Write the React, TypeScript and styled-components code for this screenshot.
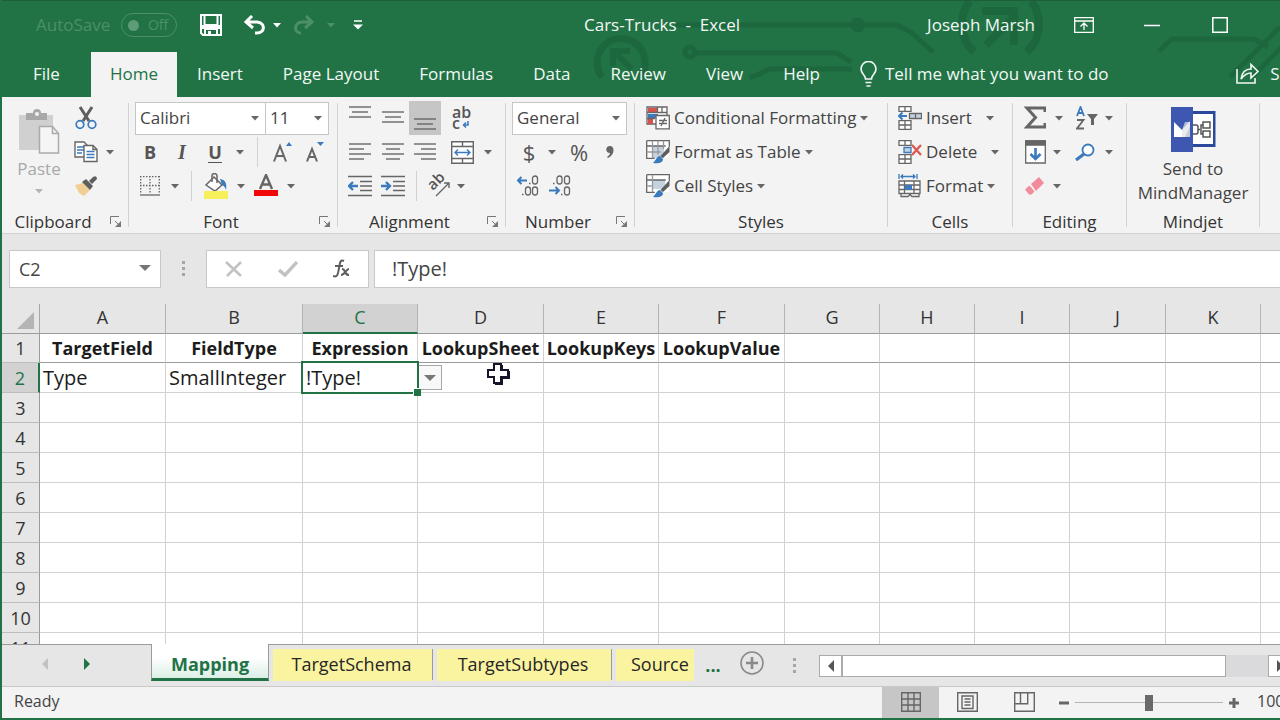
import React from "react";
import styled, { createGlobalStyle, css } from "styled-components";

const green = "#217346";
const ink = "#444444";
const blue = "#3a7abd";
const line = "#d2d2d2";
const sans = '"Open Sans", "Noto Sans", sans-serif';

const GlobalStyle = createGlobalStyle`
  *, *::before, *::after { box-sizing: border-box; }
  body { margin: 0; overflow: hidden; font-family: ${sans}; background: #e6e6e6; }
  button, input, select { font: inherit; color: inherit; }
  button { cursor: default; }
  svg { display: block; flex: none; }
`;

const Screen = styled.div`
  height: 100vh;
  overflow: hidden;
`;

/* The window hangs a little past the right edge of the screen. */
const Window = styled.div`
  width: calc(100% + 42px);
  height: 100%;
  display: flex;
  flex-direction: column;
  background: #e6e6e6;
  border-left: 2px solid ${green};
  border-bottom: 2px solid ${green};
  font-size: 17px;
  line-height: 24px;
  color: ${ink};
  white-space: nowrap;
`;

/* ---------- header ---------- */

const Header = styled.header`
  position: relative;
  flex: none;
  background: ${green};
  color: #f2f8f4;
  border-top: 1px solid #1d5f3b;
`;

const Circuit = styled.svg`
  position: absolute;
  right: 0;
  top: 0;
`;

const TitleBar = styled.div`
  position: relative;
  display: flex;
  align-items: center;
  height: 51px;
  padding-bottom: 3px;
`;

const QuickAccess = styled.div`
  flex: 1;
  display: flex;
  align-items: center;
`;

const AutoSave = styled.label`
  display: flex;
  align-items: center;
  gap: 11px;
  margin: 0 8px 0 34px;
  color: #4c8f69;
`;

const TogglePill = styled.span`
  display: flex;
  align-items: center;
  justify-content: space-between;
  width: 56px;
  height: 24px;
  padding: 0 8px 0 6px;
  border: 1px solid #4c8f69;
  border-radius: 12px;
  font-size: 14px;
  line-height: 20px;
`;

const ToggleDot = styled.input`
  appearance: none;
  width: 11px;
  height: 11px;
  margin: 0;
  border-radius: 50%;
  background: #5c9c78;
`;

const BarButton = styled.button<{ $w: number }>`
  display: flex;
  align-items: center;
  justify-content: center;
  flex: none;
  width: ${(p) => p.$w}px;
  height: 36px;
  padding: 0;
  border: 0;
  background: none;
`;

const DocTitle = styled.h1`
  margin: 0;
  font-size: 17px;
  font-weight: 400;
  white-space: pre;
`;

const WindowControls = styled.div`
  flex: 1;
  display: flex;
  align-items: center;
  justify-content: flex-end;
`;

const UserName = styled.span`
  margin-right: 15px;
`;

const RibbonTabs = styled.nav`
  position: relative;
  display: flex;
  align-items: stretch;
  height: 45px;
`;

const RibbonTab = styled.button<{ $active?: boolean; $pad?: number }>`
  padding: 0 ${(p) => p.$pad ?? 20}px 2px;
  border: 0;
  background: ${(p) => (p.$active ? "#f3f3f3" : "none")};
  color: ${(p) => (p.$active ? green : "inherit")};
`;

const TellMe = styled.button`
  display: flex;
  align-items: center;
  gap: 8px;
  padding: 0 20px 2px;
  border: 0;
  background: none;
`;

const Share = styled(TellMe)`
  margin-left: auto;
  gap: 10px;
  padding: 0 6px 2px 20px;
`;

/* ---------- ribbon ---------- */

const Ribbon = styled.div`
  display: flex;
  flex: none;
  height: 137px;
  padding-top: 4px;
  background: #f3f3f3;
  border-bottom: 1px solid ${line};
`;

const GroupBox = styled.section<{ $w: number }>`
  flex: none;
  width: ${(p) => p.$w}px;
  display: flex;
  flex-direction: column;
`;

const GroupBody = styled.div<{ $pad?: number }>`
  display: flex;
  height: 102px;
  padding-left: ${(p) => p.$pad ?? 0}px;
`;

const GroupFooter = styled.div`
  display: flex;
  align-items: center;
  padding-top: 7px;
  color: #333333;
`;

const GroupName = styled.span`
  flex: 1;
  text-align: center;
`;

const GroupRule = styled.div`
  flex: none;
  width: 1px;
  margin: 2px 0 6px;
  background: ${line};
`;

const Launcher = styled.button`
  display: grid;
  place-items: center;
  width: 24px;
  height: 24px;
  padding: 0;
  border: 0;
  background: none;
`;

const Rows = styled.div`
  display: grid;
  grid-template-rows: repeat(3, 34px);
`;

const Row = styled.div`
  display: flex;
  align-items: center;
`;

const ToolRule = styled.div<{ $gap: number }>`
  width: 1px;
  height: 30px;
  margin: 0 ${(p) => p.$gap}px;
  background: ${line};
`;

const Tool = styled.button<{ $w: number; $on?: boolean }>`
  display: flex;
  align-items: center;
  justify-content: center;
  flex: none;
  width: ${(p) => p.$w}px;
  height: 34px;
  padding: 0;
  border: 0;
  background: ${(p) => (p.$on ? "#c6c6c6" : "none")};
`;

const Glyph = styled.span<{ $kind?: "italic" | "underline" | "sign" }>`
  font-size: 18px;
  font-weight: 700;
  color: #555555;
  ${(p) =>
    p.$kind === "italic" &&
    css`
      font-family: "Liberation Serif", serif;
      font-style: italic;
      font-size: 20px;
    `}
  ${(p) =>
    p.$kind === "underline" &&
    css`
      line-height: 20px;
      border-bottom: 1px solid #555555;
    `}
  ${(p) =>
    p.$kind === "sign" &&
    css`
      font-size: 22px;
      font-weight: 400;
    `}
`;

const PasteButton = styled.button`
  display: flex;
  flex-direction: column;
  align-items: center;
  width: 50px;
  margin: 0 8px 0 12px;
  padding: 8px 0 0;
  border: 0;
  background: none;
  color: #a9a9a9;
`;

const PasteText = styled.span`
  margin: 2px 0 8px;
`;

const Picker = styled.span<{ $w: number }>`
  position: relative;
  flex: none;
  width: ${(p) => p.$w}px;
  height: 33px;
  & + & { margin-left: -1px; }
`;

const Select = styled.select`
  appearance: none;
  width: 100%;
  height: 33px;
  padding: 0 4px;
  border: 1px solid #c6c6c6;
  border-radius: 0;
  background: #ffffff;
`;

const PickerArrow = styled.span`
  position: absolute;
  right: 7px;
  top: 14px;
  pointer-events: none;
`;

const WideTool = styled.button<{ $gap?: number }>`
  display: flex;
  align-items: center;
  height: 34px;
  padding: 0;
  border: 0;
  background: none;
  text-align: left;
  & > span { margin: 0 ${(p) => p.$gap ?? 4}px 0 4px; }
`;

const BigTool = styled.button`
  display: flex;
  flex-direction: column;
  align-items: center;
  width: 100%;
  padding: 6px 0 0;
  border: 0;
  background: none;
`;

const BigToolText = styled.span`
  margin-top: 5px;
`;

/* ---------- formula bar ---------- */

const FormulaRow = styled.div`
  display: flex;
  flex: none;
  height: 70px;
  padding: 16px 0 16px 7px;
  font-size: 18px;
`;

const NameBox = styled.div`
  display: flex;
  width: 152px;
  background: #ffffff;
  border: 1px solid #c8c8c8;
`;

const NameInput = styled.input`
  flex: 1;
  min-width: 0;
  padding: 0 9px;
  border: 0;
  background: none;
`;

const Dots = styled.span`
  display: grid;
  place-items: center;
  width: 45px;
`;

const FormulaTools = styled.div`
  display: flex;
  align-items: center;
  width: 163px;
  background: #ffffff;
  border: 1px solid #c8c8c8;
`;

const FormulaInput = styled.input`
  flex: 1;
  margin-left: 5px;
  padding: 0 17px;
  border: 1px solid #c8c8c8;
  border-right: 0;
  background: #ffffff;
  font-size: 20px;
`;

/* ---------- sheet ---------- */

const SheetArea = styled.main`
  flex: 1;
  min-height: 0;
  overflow: hidden;
  background: #ffffff;
`;

const Sheet = styled.table`
  table-layout: fixed;
  width: 100%;
  border-collapse: separate;
  border-spacing: 0;
  color: #1c1c1c;
  font-size: 20px;
`;

const Col = styled.col<{ $w?: number }>`
  width: ${(p) => (p.$w ? `${p.$w}px` : "auto")};
`;

const Corner = styled.td`
  height: 30px;
  padding: 0 5px 4px 0;
  vertical-align: bottom;
  background: #e6e6e6;
  border-right: 1px solid #a6a6a6;
  border-bottom: 1px solid #9b9b9b;
  svg { margin-left: auto; }
`;

const ColHead = styled.th<{ $on?: boolean }>`
  height: 30px;
  padding: 0 0 ${(p) => (p.$on ? 2 : 3)}px;
  font-size: 18px;
  font-weight: 400;
  line-height: 24px;
  background: ${(p) => (p.$on ? "#d2d2d2" : "#e6e6e6")};
  color: ${(p) => (p.$on ? green : "#333333")};
  border-right: 1px solid #b4b4b4;
  border-bottom: ${(p) => (p.$on ? `2px solid ${green}` : "1px solid #9b9b9b")};
`;

const RowHead = styled.th<{ $on?: boolean }>`
  padding: 0;
  font-size: 18px;
  font-weight: 400;
  background: ${(p) => (p.$on ? "#d2d2d2" : "#e6e6e6")};
  color: ${(p) => (p.$on ? green : "#333333")};
  border-right: ${(p) => (p.$on ? `2px solid ${green}` : "1px solid #9b9b9b")};
  border-bottom: 1px solid #bdbdbd;
`;

const Cell = styled.td`
  position: relative;
  padding: 0 3px;
  border-right: 1px solid ${line};
  border-bottom: 1px solid ${line};
`;

const SheetRow = styled.tr<{ $frozen?: boolean }>`
  height: ${(p) => (p.$frozen ? 29 : 30)}px;
  ${(p) =>
    p.$frozen &&
    css`
      ${Cell} {
        padding: 0;
        border-bottom-color: #9b9b9b;
        font-size: 18px;
        font-weight: 700;
        text-align: center;
      }
    `}
`;

const Selection = styled.div`
  position: absolute;
  inset: -2px;
  border: 2px solid ${green};
  pointer-events: none;
  z-index: 2;
  &::after {
    content: "";
    position: absolute;
    right: -4px;
    bottom: -4px;
    width: 8px;
    height: 8px;
    background: ${green};
    border: 1px solid #ffffff;
    border-width: 1px 0 0 1px;
  }
`;

const CellMenu = styled.button`
  position: absolute;
  left: 100%;
  top: 2px;
  display: grid;
  place-items: center;
  width: 25px;
  height: 25px;
  padding: 0;
  background: #f8f8f8;
  border: 1px solid #a8a8a8;
  z-index: 1;
`;

const Pointer = styled.svg`
  position: absolute;
  left: 68px;
  top: -1px;
`;

/* ---------- sheet tabs ---------- */

const TabStrip = styled.div`
  display: flex;
  flex: none;
  height: 43px;
  border-top: 1px solid #9b9b9b;
  border-bottom: 1px solid #c8c8c8;
  font-size: 18px;
`;

const TabArrows = styled.div`
  display: flex;
  align-items: center;
  width: 149px;
  padding-left: 22px;
  padding-bottom: 4px;
`;

const ActiveTab = styled.button`
  width: 118px;
  height: 37px;
  margin-top: -1px;
  padding: 5px 0 0;
  border: 0;
  border-bottom: 3px solid ${green};
  border-left: 1px solid #9b9b9b;
  border-right: 1px solid #9b9b9b;
  background: linear-gradient(#ffffff 40%, #dcefe5);
  color: ${green};
  font-weight: 700;
`;

const ColourTab = styled.button<{ $w: number; $cut?: boolean }>`
  width: ${(p) => p.$w}px;
  height: 32px;
  margin: 4px 0 0 4px;
  padding: 0 2px 2px ${(p) => (p.$cut ? 15 : 0)}px;
  border: 0;
  text-align: ${(p) => (p.$cut ? "left" : "center")};
  background: #faf3a0;
  color: #262626;
`;

const TabRule = styled.span`
  width: 1px;
  height: 31px;
  margin-top: 4px;
  background: #9b9b9b;
`;

const MoreTabs = styled.button`
  width: 38px;
  padding: 0 0 2px;
  border: 0;
  background: none;
  color: ${green};
  font-weight: 700;
`;

const ScrollBar = styled.div`
  display: flex;
  flex: 1;
  height: 22px;
  margin: 10px 31px 0 2px;
  background: #dadadc;
`;

const ScrollButton = styled.button`
  display: grid;
  place-items: center;
  width: 23px;
  padding: 0;
  border: 1px solid #ababab;
  background: #ffffff;
`;

const ScrollThumb = styled.div`
  flex: 1;
  margin-right: 42px;
  margin-left: -1px;
  border: 1px solid #ababab;
  border-left-width: 2px;
  background: #ffffff;
`;

/* ---------- status bar ---------- */

const StatusBar = styled.footer`
  display: flex;
  align-items: center;
  flex: none;
  height: 31px;
  padding-left: 12px;
  background: #f3f3f3;
  font-size: 16px;
`;

const Status = styled.span`
  flex: 1;
  padding-bottom: 3px;
`;

const ViewButton = styled.button<{ $on?: boolean }>`
  display: grid;
  place-items: center;
  width: 57px;
  height: 31px;
  padding: 0 0 1px;
  border: 0;
  background: ${(p) => (p.$on ? "#c6c6c6" : "none")};
`;

const Zoom = styled.input`
  appearance: none;
  width: 148px;
  height: 16px;
  margin: 0;
  background: linear-gradient(#b4b4b4, #b4b4b4) center / 100% 1px no-repeat;
  &::-webkit-slider-thumb {
    appearance: none;
    width: 8px;
    height: 16px;
    background: #6a6a6a;
  }
`;

const ZoomStep = styled.button`
  display: grid;
  place-items: center;
  width: 22px;
  height: 24px;
  padding: 0;
  border: 0;
  background: none;
`;

const ZoomValue = styled.button`
  width: 77px;
  padding: 0 0 3px 12px;
  border: 0;
  background: none;
  text-align: left;
`;

/* ---------- drawings ---------- */

const Arrow = ({ fill = "#666666" }: { fill?: string }) => (
  <svg width="8" height="5" viewBox="0 0 8 5"><path d="M0 0h8L4 4.6z" fill={fill} /></svg>
);

const WideArrow = () => (
  <svg width="12" height="6" viewBox="0 0 12 6"><path d="M0 0h12L6 6z" fill="#777777" /></svg>
);

const Side = ({ left, fill }: { left?: boolean; fill: string }) => (
  <svg width="6" height="12" viewBox="0 0 6 12"><path d={left ? "M6 0v12L0 6z" : "M0 0v12l6-6z"} fill={fill} /></svg>
);

type DrawProps = { w: number; h: number; children: React.ReactNode; stroke?: string; sw?: number };
const Draw = ({ w, h, children, stroke = "#666666", sw = 1.5 }: DrawProps) => (
  <svg width={w} height={h} viewBox={`0 0 ${w} ${h}`} fill="none" stroke={stroke} strokeWidth={sw} aria-hidden="true">{children}</svg>
);

const DotsIcon = () => (
  <Draw w={4} h={16} stroke="none"><path d="M0 0h3v3H0zM0 6h3v3H0zM0 12h3v3H0z" fill="#a6a6a6" /></Draw>
);

const LauncherIcon = () => (
  <Draw w={12} h={12} stroke="#777777" sw={1}>
    <path d="M.5 8V.5H9M5 5l4 4" /><path d="M11 5v6H5z" fill="#777777" stroke="none" />
  </Draw>
);

const Lines = ({ rows }: { rows: [number, number, number][] }) => (
  <Draw w={22} h={24} sw={1.4}>
    {rows.map(([y, a, b]) => <path key={y} d={`M${a} ${y}H${b}`} />)}
  </Draw>
);

const IndentIcon = ({ more }: { more?: boolean }) => (
  <Draw w={24} h={22} sw={1.4}>
    <path d="M0 1.5h24M12 6.500h12M12 11h12M12 15.500h12M0 20.500h24" />
    {more
      ? <path d="M0 11h8M5 7l4 4-4 4" stroke={blue} strokeWidth="2.400" />
      : <path d="M2 11h8M5 7l-4 4 4 4" stroke={blue} strokeWidth="2.400" />}
  </Draw>
);

const TableBrush = ({ head }: { head?: boolean }) => (
  <Draw w={24} h={24} sw={1.3}>
    <path d="M1 1h22v17H1z" fill="#fff" stroke="none" />
    <path d={head ? "M7 6h12v9H7z" : "M7 6h11v12H7z"} fill="#c5d3e0" stroke="none" />
    <path d="M.7.7h22.600v6M.7.7v17.600h8M.7 6h19" />
    {head
      ? <path d="M6.500.7v17.600M.7 12h5" stroke="#999999" />
      : <path d="M6.500.7v17.600M12 .7v14M17.500.7V9M.7 12h14" stroke="#999999" />}
    <path d="m23.500 6-9 10 2.500 2 6.500-6z" fill="#5e5e5e" stroke="none" />
    <path d="M14 16c-3 0-3 3-7 7 5 1 10 0 10-4z" fill={blue} stroke="none" />
  </Draw>
);

const CellsBase = () => (
  <path d="M1 .7h12v4.600H1zM7 .7v4.600M1 14.700h12v8.600H1zM7 14.700v8.600M1 19h12" fill="#fff" />
);

const CircuitArt = () => (
  <Circuit width="740" height="96" viewBox="0 0 740 96" fill="none" stroke="#1d673f" strokeWidth="5" aria-hidden="true">
    <path d="M20 76a24 24 0 1 1 39-1" strokeWidth="7" />
    <path d="M50 68 33 52M31 65V50h17" strokeWidth="6" />
    <path d="M93 24h222l14 7 22 20" />
    <circle cx="276" cy="24" r="5" />
    <circle cx="108" cy="51" r="5" />
    <path d="M113 52h142l14 9M270 68h-82l-20 9" />
    <path d="M392 51a38 38 0 0 1-4-51M445 51a38 38 0 0 0 4-51" strokeWidth="8" />
    <path d="M400 10h36M432 12v32M434 14l-30 30" strokeWidth="8" />
    <path d="M577 50l13-12h82l14 8M698 26l-50 50M720 26l-50 50" />
  </Circuit>
);

/* ---------- pieces ---------- */

type GroupProps = { name: string; w: number; pad?: number; launcher?: boolean; children: React.ReactNode };
const Group = ({ name, w, pad, launcher, children }: GroupProps) => (
  <>
    <GroupBox $w={w} aria-label={name}>
      <GroupBody $pad={pad}>{children}</GroupBody>
      <GroupFooter>
        <GroupName>{name}</GroupName>
        {launcher && <Launcher aria-label={`${name} settings`}><LauncherIcon /></Launcher>}
      </GroupFooter>
    </GroupBox>
    <GroupRule />
  </>
);

const Drop = ({ w, label }: { w: number; label: string }) => (
  <Tool $w={w} aria-label={label}><Arrow /></Tool>
);

const PickerField = ({ w, label, value }: { w: number; label: string; value: string }) => (
  <Picker $w={w}>
    <Select aria-label={label} defaultValue={value}><option>{value}</option></Select>
    <PickerArrow><Arrow /></PickerArrow>
  </Picker>
);

/* The last column takes whatever width is left. */
const columns: [string, number?][] = [
  ["A", 126], ["B", 137], ["C", 115], ["D", 126], ["E", 115], ["F", 126],
  ["G", 95], ["H", 95], ["I", 95], ["J", 96], ["K", 95], ["L"],
];
const data: Record<number, string[]> = {
  1: ["TargetField", "FieldType", "Expression", "LookupSheet", "LookupKeys", "LookupValue"],
  2: ["Type", "SmallInteger", "!Type!"],
};
const rowNumbers = Array.from({ length: 12 }, (_, i) => i + 1);

export default function App() {
  return (
    <Screen>
      <GlobalStyle />
      <Window>
        <Header>
          <CircuitArt />
          <TitleBar>
            <QuickAccess>
              <AutoSave>
                AutoSave
                <TogglePill><ToggleDot type="checkbox" disabled />Off</TogglePill>
              </AutoSave>
              <BarButton $w={52} aria-label="Save">
                <Draw w={22} h={22} stroke="#ffffff" sw={2}>
                  <path d="M1 1h20v20H3l-2-2zM4.500 1v10h13V1M5 21v-6h12v6" />
                  <path d="M1 11h20v4H1z" fill="#fff" stroke="none" /><path d="M9.500 17v4" strokeWidth="3" />
                </Draw>
              </BarButton>
              <BarButton $w={36} aria-label="Undo">
                <Draw w={24} h={20} stroke="#ffffff" sw={3}>
                  <path d="M4 7h10c9 1 8 11 0 11h-2M9 1 3 7l7 6" />
                </Draw>
              </BarButton>
              <BarButton $w={8} aria-label="Undo history"><Arrow fill="#ffffff" /></BarButton>
              <BarButton $w={46} aria-label="Redo">
                <Draw w={22} h={20} stroke="#4c8f69" sw={3}>
                  <path d="M18 7H9C0 8 1 18 8 18M13 1l6 6-7 6" />
                </Draw>
              </BarButton>
              <BarButton $w={8} aria-label="Redo history"><Arrow fill="#4c8f69" /></BarButton>
              <BarButton $w={46} aria-label="Customize toolbar">
                <Draw w={10} h={10} stroke="#ffffff"><path d="M1 1h8" /><path d="M0 4.500h10l-5 5z" fill="#fff" stroke="none" /></Draw>
              </BarButton>
            </QuickAccess>
            <DocTitle>{"Cars-Trucks  -  Excel"}</DocTitle>
            <WindowControls>
              <UserName>Joseph Marsh</UserName>
              <BarButton $w={68} aria-label="Ribbon display options">
                <Draw w={20} h={16} stroke="#ffffff" sw={1.3}><path d="M.7.7h18.600v14.600H.7zM.7 4h18.600M10 13V6M6.500 9.500 10 6l3.500 3.500" /></Draw>
              </BarButton>
              <BarButton $w={68} aria-label="Minimize"><Draw w={16} h={16} stroke="#ffffff"><path d="M0 8.500h16" /></Draw></BarButton>
              <BarButton $w={68} aria-label="Maximize"><Draw w={16} h={16} stroke="#ffffff"><path d="M.8.8h14.400v14.400H.8z" /></Draw></BarButton>
              <BarButton $w={68} aria-label="Close"><Draw w={16} h={16} stroke="#ffffff"><path d="m1 1 14 14M15 1 1 15" /></Draw></BarButton>
            </WindowControls>
          </TitleBar>
          <RibbonTabs>
            <RibbonTab $pad={31}>File</RibbonTab>
            <RibbonTab $active $pad={19}>Home</RibbonTab>
            {["Insert", "Page Layout", "Formulas", "Data", "Review", "View", "Help"].map((t) => <RibbonTab key={t}>{t}</RibbonTab>)}
            <TellMe>
              <Draw w={17} h={26} stroke="#f2f8f4" sw={1.6}>
                <path d="M5.500 18c0-4-4.500-5-4.500-10a7.500 7.500 0 0 1 15 0c0 5-4.500 6-4.500 10zM5.500 21.500h6M6.500 25h4" />
              </Draw>
              Tell me what you want to do
            </TellMe>
            <Share>
              <Draw w={24} h={22} stroke="#f2f8f4" sw={1.6}>
                <path d="M1 6v14h18v-5M5 16c1-7 5-10 10-10V1.500l7 7-7 6.500v-5c-4 0-7 2-10 6z" />
              </Draw>
              Share
            </Share>
          </RibbonTabs>
        </Header>

        <Ribbon>
          <Group name="Clipboard" w={126} launcher>
            <PasteButton>
              <Draw w={42} h={46} stroke="none">
                <path d="M1 6h34v35H1z" fill="#d0d0d0" />
                <path d="M8 4h7a4 4 0 0 1 8 0h6v7H8z" fill="#a8a8a8" /><circle cx="19" cy="5" r="2" fill="#f3f3f3" />
                <path d="M21.500 17.500h13l6 7V44h-19z" fill="#f6f4f6" stroke="#aaaaaa" strokeWidth="1.500" />
                <path d="M34.500 17.500v7h6" stroke="#aaaaaa" strokeWidth="1.500" />
              </Draw>
              <PasteText>Paste</PasteText>
              <Arrow fill="#b5b5b5" />
            </PasteButton>
            <Rows>
              <Row>
                <Tool $w={28} aria-label="Cut">
                  <Draw w={22} h={24} sw={3}>
                    <path d="m5 1 9 14M17 1 8 15" stroke="#5e5e5e" />
                    <circle cx="5" cy="18.500" r="3.800" stroke={blue} strokeWidth="1.700" /><circle cx="17" cy="18.500" r="3.800" stroke={blue} strokeWidth="1.700" />
                  </Draw>
                </Tool>
              </Row>
              <Row>
                <Tool $w={28} aria-label="Copy">
                  <Draw w={24} h={22} sw={1.4}>
                    <path d="M1 1h9l3 3v12H1z" fill="#fff" /><path d="M3 6h7M3 9h7M3 12h5" stroke={blue} />
                    <path d="M10 4.500h9l4 4v12H10z" fill="#fff" /><path d="M19 4.500v4h4" /><path d="M12.500 10.500h8M12.500 13.500h8M12.500 16.500h8" stroke={blue} />
                  </Draw>
                </Tool>
                <Drop w={20} label="Copy options" />
              </Row>
              <Row>
                <Tool $w={28} aria-label="Format painter">
                  <Draw w={24} h={22} stroke="none">
                    <path d="m1 10 8-2 7 7-6 6-5-3z" fill="#efcf94" /><path d="m8 7 4-3 7 7-3 4z" fill="#5e5e5e" /><path d="m15 6 4-4q4-2 4 2l-5 5z" fill="#5e5e5e" />
                  </Draw>
                </Tool>
              </Row>
            </Rows>
          </Group>

          <Group name="Font" w={208} pad={6} launcher>
            <Rows>
              <Row>
                <PickerField w={131} label="Font" value="Calibri" />
                <PickerField w={64} label="Font size" value="11" />
              </Row>
              <Row>
                <Tool $w={30}><Glyph>B</Glyph></Tool>
                <Tool $w={34}><Glyph $kind="italic">I</Glyph></Tool>
                <Tool $w={32}><Glyph $kind="underline">U</Glyph></Tool>
                <Drop w={18} label="Underline styles" />
                <ToolRule $gap={8} />
                <Tool $w={34} aria-label="Increase font size">
                  <Draw w={20} h={22} sw={2}><path d="M1 20.500 7 5l6 15.500M3 15h8" /><path d="M13 5h6l-3-4z" fill={blue} stroke="none" /></Draw>
                </Tool>
                <Tool $w={30} aria-label="Decrease font size">
                  <Draw w={18} h={22} sw={2}><path d="M1 20.500 6 8l5 12.500M3 16h6" /><path d="M11 1h7l-3.500 4z" fill={blue} stroke="none" /></Draw>
                </Tool>
              </Row>
              <Row>
                <Tool $w={30} aria-label="Borders">
                  <Draw w={20} h={20} sw={1.3}><path d="M.7 0v18M10 0v18M19.300 0v18M0 .7h20M0 9.500h20" strokeDasharray="1.500 1.500" /><path d="M0 19h20" /></Draw>
                </Tool>
                <Drop w={20} label="Border styles" />
                <ToolRule $gap={6} />
                <Tool $w={36} aria-label="Fill colour">
                  <Draw w={24} h={26} sw={1.5}>
                    <path d="M2 12 10 4l8 8-7 6z" fill="#fff" /><path d="M8 9V3a2.500 2.500 0 0 1 5 0v7" />
                    <path d="M16 6c6 1 7 5 6 11-1-3-2-4-4-5z" fill={blue} stroke="none" /><path d="M0 18h24v8H0z" fill="#f7f05a" stroke="none" />
                  </Draw>
                </Tool>
                <Drop w={14} label="Fill colours" />
                <Tool $w={36} aria-label="Font colour">
                  <Draw w={24} h={24} sw={2.4}><path d="M6 15 12 1l6 14M8 10.500h8" /><path d="M0 16h24v6H0z" fill="#f00808" stroke="none" /></Draw>
                </Tool>
                <Drop w={14} label="Font colours" />
              </Row>
            </Rows>
          </Group>

          <Group name="Alignment" w={167} pad={6} launcher>
            <Rows>
              <Row>
                <Tool $w={32} aria-label="Top align"><Lines rows={[[1, 0, 22], [6, 3, 19], [11, 0, 22]]} /></Tool>
                <Tool $w={33} aria-label="Middle align"><Lines rows={[[6, 0, 22], [11, 3, 19], [16, 0, 22]]} /></Tool>
                <Tool $w={32} $on aria-label="Bottom align"><Lines rows={[[13, 0, 22], [18, 3, 19], [23, 0, 22]]} /></Tool>
                <Tool $w={42} aria-label="Wrap text">
                  <svg width="20" height="24" viewBox="0 0 20 24" fill="#555555" fontSize="16" fontWeight="600" aria-hidden="true">
                    <text x="0" y="12">ab</text><text x="0" y="23">c</text>
                    <path d="M16 15v4h-4M14 16.500 11.500 19l2.500 2.500" fill="none" stroke={blue} strokeWidth="1.500" />
                  </svg>
                </Tool>
              </Row>
              <Row>
                <Tool $w={32} aria-label="Align left"><Lines rows={[[4, 0, 22], [9, 0, 15], [14, 0, 22], [19, 0, 15]]} /></Tool>
                <Tool $w={33} aria-label="Center"><Lines rows={[[4, 0, 22], [9, 4, 18], [14, 0, 22], [19, 4, 18]]} /></Tool>
                <Tool $w={32} aria-label="Align right"><Lines rows={[[4, 0, 22], [9, 7, 22], [14, 0, 22], [19, 7, 22]]} /></Tool>
                <Tool $w={42} aria-label="Merge and center">
                  <Draw w={23} h={23} sw={1.4}><path d="M.7.7h21.600v21.600H.7zM.7 5.500h21.600M.7 17.500h21.600M11.500.7v4.800M11.500 17.500v4.800" fill="#fff" /><path d="M4 11.500h15M7 8.500l-3 3 3 3M16 8.500l3 3-3 3" stroke={blue} /></Draw>
                </Tool>
                <Drop w={10} label="Merge options" />
              </Row>
              <Row>
                <Tool $w={32} aria-label="Decrease indent"><IndentIcon /></Tool>
                <Tool $w={33} aria-label="Increase indent"><IndentIcon more /></Tool>
                <ToolRule $gap={7} />
                <Tool $w={30} aria-label="Orientation">
                  <svg width="24" height="24" viewBox="0 0 24 24" fill="#555555" fontSize="15" fontWeight="600" aria-hidden="true">
                    <text transform="translate(6 17) rotate(-45)">ab</text>
                    <path d="M9 22 22 9M17 9h5v5" fill="none" stroke="#666666" strokeWidth="1.400" />
                  </svg>
                </Tool>
                <Drop w={14} label="Orientation options" />
              </Row>
            </Rows>
          </Group>

          <Group name="Number" w={128} pad={6} launcher>
            <Rows>
              <Row><PickerField w={115} label="Number format" value="General" /></Row>
              <Row>
                <Tool $w={34}><Glyph $kind="sign">$</Glyph></Tool>
                <Drop w={12} label="Currencies" />
                <Tool $w={42}><Glyph $kind="sign">%</Glyph></Tool>
                <Tool $w={20} aria-label="Comma style">
                  <Draw w={8} h={13} stroke="none"><path d="M4 0c5 0 5 9-2 12l-1-1c2-1 3-3 3-4C-1 7-1 0 4 0z" fill="#666" /></Draw>
                </Tool>
              </Row>
              <Row>
                <Tool $w={32} aria-label="Increase decimal">
                  <Draw w={22} h={22} sw={1.3}>
                    <path d="M1 5.500h9M4.500 2 1 5.500 4.500 9" stroke={blue} strokeWidth="2" /><path d="M12 8.500h1.500M5 19.500h1.500" />
                    <rect x="15.500" y="1" width="5" height="8" rx="2.500" /><rect x="8.500" y="12" width="5" height="8" rx="2.500" /><rect x="15.500" y="12" width="5" height="8" rx="2.500" />
                  </Draw>
                </Tool>
                <Tool $w={32} aria-label="Decrease decimal">
                  <Draw w={22} h={22} sw={1.3}>
                    <path d="M0 15.500h10M6.500 12l3.500 3.500L6.500 19" stroke={blue} strokeWidth="2" /><path d="M4 8.500h1.500M12 19.500h1.500" />
                    <rect x="8" y="1" width="5" height="8" rx="2.500" /><rect x="15.500" y="1" width="5" height="8" rx="2.500" /><rect x="15.500" y="12" width="5" height="8" rx="2.500" />
                  </Draw>
                </Tool>
              </Row>
            </Rows>
          </Group>

          <Group name="Styles" w={252} pad={11}>
            <Rows>
              <WideTool>
                <Draw w={24} h={24} sw={1.3}>
                  <path d="M1 1h20v17H1z" fill="#fff" /><path d="M2 2h9v4H2zM2 13h5v5H2z" fill="#d9514a" stroke="none" /><path d="M2 8h10v4H2z" fill={blue} stroke="none" />
                  <path d="M1 6.500h20M1 12.500h8M11.500 1v6M16 1v6" /><path d="M10 9.500h13.300v13.300H10z" fill="#fff" /><path d="M13 14.500h8M13 17.500h8M19 12l-4 8" />
                </Draw>
                <span>Conditional Formatting</span><Arrow />
              </WideTool>
              <WideTool><TableBrush /><span>Format as Table</span><Arrow /></WideTool>
              <WideTool><TableBrush head /><span>Cell Styles</span><Arrow /></WideTool>
            </Rows>
          </Group>

          <Group name="Cells" w={124} pad={10}>
            <Rows>
              <WideTool $gap={14}>
                <Draw w={24} h={24} sw={1.3}><CellsBase /><path d="M11.500 7.500h12v5h-12zM17.500 7.500v5" fill="#c5d3e0" /><path d="M1 10h8M4.500 6.500 1 10l3.500 3.500" stroke={blue} strokeWidth="2" /></Draw>
                <span>Insert</span><Arrow />
              </WideTool>
              <WideTool $gap={14}>
                <Draw w={24} h={24} sw={1.3}><CellsBase /><path d="M6 7.500h7v5H6z" fill="#c5d3e0" stroke={blue} /><path d="m14 5 9 10M23 5l-9 10" stroke="#dd5a50" strokeWidth="2.400" /></Draw>
                <span>Delete</span><Arrow />
              </WideTool>
              <WideTool>
                <Draw w={24} h={24} sw={1.3}>
                  <path d="M1 0v5M19 0v5M3 2.500h14M5 .5l-2 2 2 2M15 .5l2 2-2 2" stroke={blue} />
                  <path d="M1 7h21v12.500H1zM1 11h21M1 15.500h21M6.500 7v12.500M16 7v12.500M3 19.500v3h7l2-2 2 2h7v-3" fill="#fff" /><path d="M7 11h7v5H7z" fill={blue} stroke="none" />
                </Draw>
                <span>Format</span><Arrow />
              </WideTool>
            </Rows>
          </Group>

          <Group name="Editing" w={113} pad={8}>
            <Rows>
              <Row>
                <Tool $w={28} aria-label="AutoSum"><Draw w={22} h={24} sw={3}><path d="M21 6V2H3l8.500 9.500L3 21h18v-4" /></Draw></Tool>
                <Drop w={20} label="AutoSum functions" />
                <Tool $w={36} aria-label="Sort and filter">
                  <Draw w={22} h={24} sw={1.8}><path d="m1 10 3.500-9L8 10M2.500 7h4" stroke={blue} /><path d="M1 14h6.500L1 22.500h7" /><path d="M11 8h11l-4 5v6h-3v-6z" fill="#666" stroke="none" /></Draw>
                </Tool>
                <Drop w={8} label="Sort options" />
              </Row>
              <Row>
                <Tool $w={28} aria-label="Fill">
                  <Draw w={21} h={24} sw={1.3}><path d="M.7 1h19.600v22H.7z" fill="#fff" /><path d="M.7 1h19.600v4H.7z" fill="#666" /><path d="M10.500 8v11M5.500 14l5 5 5-5" stroke={blue} strokeWidth="2.600" /></Draw>
                </Tool>
                <Drop w={16} label="Fill options" />
                <Tool $w={40} aria-label="Find and select">
                  <Draw w={20} h={18} stroke={blue} sw={1.8}><circle cx="13" cy="7" r="5.500" fill="#fff" /><path d="m9 11-8 6" strokeWidth="3.200" /></Draw>
                </Tool>
                <Drop w={8} label="Find options" />
              </Row>
              <Row>
                <Tool $w={28} aria-label="Clear"><Draw w={22} h={20} stroke="none"><path d="m7 8 8-7 5 6-8 8zM5.500 9.500l5 6-3 3H5l-4-5z" fill="#f08c9c" /></Draw></Tool>
                <Drop w={16} label="Clear options" />
              </Row>
            </Rows>
          </Group>

          <Group name="Mindjet" w={132}>
            <BigTool>
              <Draw w={45} h={45} stroke="none">
                <path d="M20 4h24.500v36H20z" fill="#2b4a9c" /><path d="M22 7h20v30H22z" fill="#fff" /><path d="M0 0h22v45H0z" fill="#3e57b0" />
                <path d="M3 15l8 8v7H3z" fill="#fff" /><path d="M19 14v16h-8v-7z" fill="#c8ced8" /><path d="m11 23 3-8h5v4l-5 11h-3z" fill="#fff" opacity=".6" />
                <path d="M22 18h3q2 0 2 2v5q0 2-2 2h-3M27 22.500h2M32 18h-2v9h2M32 15h7v6h-7zM32 24h7v6h-7z" stroke="#555" strokeWidth="1.500" />
              </Draw>
              <BigToolText>Send to<br />MindManager</BigToolText>
            </BigTool>
          </Group>
        </Ribbon>

        <FormulaRow>
          <NameBox>
            <NameInput aria-label="Name box" defaultValue="C2" />
            <Tool $w={30} aria-label="Names"><WideArrow /></Tool>
          </NameBox>
          <Dots><DotsIcon /></Dots>
          <FormulaTools>
            <Tool $w={54} aria-label="Cancel"><Draw w={18} h={16} stroke="#c2c2c2" sw={2.6}><path d="m1 1 15 14M16 1 2 15" /></Draw></Tool>
            <Tool $w={54} aria-label="Enter"><Draw w={20} h={16} stroke="#c2c2c2" sw={3.4}><path d="m1 9 6 5L19 1" /></Draw></Tool>
            <Tool $w={53} aria-label="Insert function">
              <Draw w={18} h={20} sw={2} stroke="#5e5e5e"><path d="M11 2C7 0 7 4 6 9s-1 10-6 8M2 7h8M9 10c4 0 2 6 7 6M16 10c-3 0-4 6-8 6" /></Draw>
            </Tool>
          </FormulaTools>
          <FormulaInput aria-label="Formula" defaultValue="!Type!" />
        </FormulaRow>

        <SheetArea>
          <Sheet>
            <colgroup>
              <Col $w={38} />
              {columns.map(([c, w]) => <Col key={c} $w={w} />)}
            </colgroup>
            <thead>
              <tr>
                <Corner><Draw w={17} h={17} stroke="none"><path d="M17 0v17H0z" fill="#b4b4b4" /></Draw></Corner>
                {columns.map(([c]) => <ColHead key={c} $on={c === "C"}>{c}</ColHead>)}
              </tr>
            </thead>
            <tbody>
              {rowNumbers.map((r) => (
                <SheetRow key={r} $frozen={r === 1}>
                  <RowHead $on={r === 2}>{r}</RowHead>
                  {columns.map(([c], i) => (
                    <Cell key={c}>
                      {data[r]?.[i]}
                      {r === 2 && c === "C" && (
                        <><Selection /><CellMenu aria-label="Choose value"><WideArrow /></CellMenu></>
                      )}
                      {r === 2 && c === "D" && (
                        <Pointer width="24" height="24" viewBox="0 0 24 24"><path d="M8 2h7v6h7v7h-7v6H8v-6H2V8h6z" fill="#fff" stroke="#15152a" strokeWidth="2" /><path d="M16 3v5M23 9v7h-7v6H9" fill="none" stroke="#15152a" strokeWidth="2" /></Pointer>
                      )}
                    </Cell>
                  ))}
                </SheetRow>
              ))}
            </tbody>
          </Sheet>
        </SheetArea>

        <TabStrip>
          <TabArrows>
            <Tool $w={42} aria-label="Previous sheet"><Side left fill="#c2c2c2" /></Tool>
            <Tool $w={42} aria-label="Next sheet"><Side fill={green} /></Tool>
          </TabArrows>
          <ActiveTab>Mapping</ActiveTab>
          <ColourTab $w={159}>TargetSchema</ColourTab><TabRule />
          <ColourTab $w={174}>TargetSubtypes</ColourTab><TabRule />
          <ColourTab $w={78} $cut>Source</ColourTab>
          <MoreTabs>...</MoreTabs>
          <BarButton $w={40} aria-label="New sheet">
            <Draw w={24} h={24} stroke="#8a8a8a" sw={1.6}><circle cx="12" cy="12" r="11" /><path d="M12 6v12M6 12h12" strokeWidth="2.600" /></Draw>
          </BarButton>
          <Dots><DotsIcon /></Dots>
          <ScrollBar>
            <ScrollButton aria-label="Scroll left"><Side left fill="#555555" /></ScrollButton>
            <ScrollThumb />
            <ScrollButton aria-label="Scroll right"><Side fill="#555555" /></ScrollButton>
          </ScrollBar>
        </TabStrip>

        <StatusBar>
          <Status>Ready</Status>
          <ViewButton $on aria-label="Normal view"><Draw w={20} h={20} sw={1.4}><path d="M.7.7h18.600v18.600H.7zM7 .7v18.600M13 .7v18.600M.7 7h18.600M.7 13h18.600" /></Draw></ViewButton>
          <ViewButton aria-label="Page layout view"><Draw w={21} h={20} sw={1.4}><path d="M.7.7h19.600v18.600H.7zM5 4h11v12.500H5zM7.500 7h6M7.500 10h6M7.500 13h6" /></Draw></ViewButton>
          <ViewButton aria-label="Page break view"><Draw w={21} h={20} sw={1.4}><path d="M.7.7h19.600v18.600H.7zM6.500.7v11M.7 11.700h13v-11" /></Draw></ViewButton>
          <ZoomStep aria-label="Zoom out"><Draw w={10} h={10} sw={3}><path d="M0 5h10" /></Draw></ZoomStep>
          <Zoom type="range" aria-label="Zoom" min={10} max={190} defaultValue={100} />
          <ZoomStep aria-label="Zoom in"><Draw w={10} h={10} sw={3}><path d="M0 5h10M5 0v10" /></Draw></ZoomStep>
          <ZoomValue>100%</ZoomValue>
        </StatusBar>
      </Window>
    </Screen>
  );
}
